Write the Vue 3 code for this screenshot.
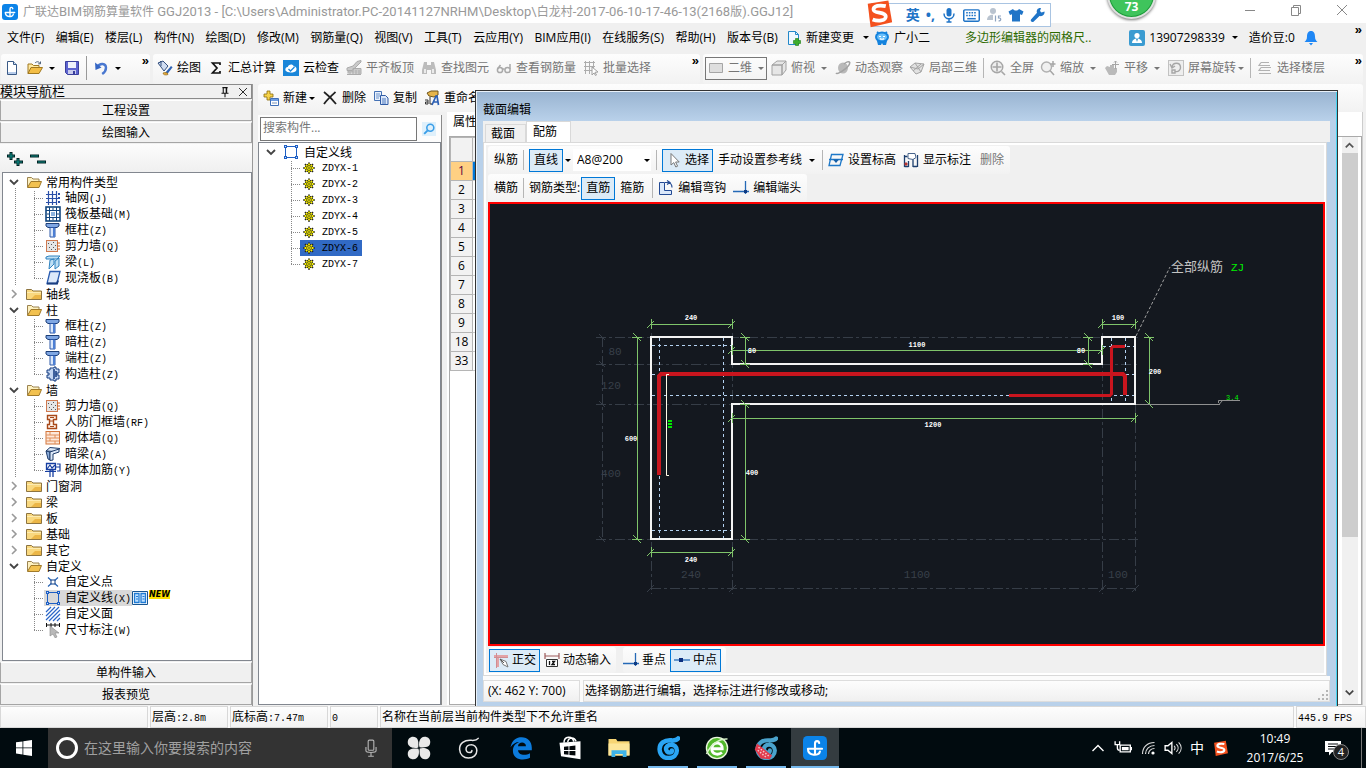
<script setup>
import { h, ref } from 'vue'

const umbrella = '<path d="M10.800 4.700C10.600 3 8 2.800 8 5v7.300M3.300 8.500h9.400M3.300 8.500c0 5 7.700 5 8 1.800" fill="none" stroke="#fff" stroke-width="1.400" stroke-linecap="round"/>'
const frameLine = '<rect x="2.500" y="2.500" width="11" height="11" fill="none" stroke="#1e5fc4"/><path d="M1 1h3v3H1zM12 1h3v3h-3zM1 12h3v3H1zM12 12h3v3h-3z" fill="#1e5fc4"/><path d="M2 2h1v1H2zM13 2h1v1h-1zM2 13h1v1H2zM13 13h1v1h-1z" fill="#cfe2ff"/>'
const swirl = (a, b) => `<path d="M14.800 1.600c-1 1.300-2.500 1.400-4.300 1.300C5.500 2.400 2.200 5 2.400 9c.2 3.500 2.700 5.700 5.900 5.700 3.400 0 5.600-2.200 5.600-5 0-2.400-1.800-4-4-3.900-1.900 0-3.300 1.400-3.200 3 .1 1.300 1.100 2.200 2.300 2.200 1 0 1.600-.6 1.600-1.400" fill="none" stroke="${a}" stroke-width="${b}" stroke-linecap="round"/>`
const sogou = '<path d="M2 2.500 13 .8l2 11.600-11.500 2.700z" fill="#f4511e"/><path d="M11.600 3.800c-3-.7-6.800-.3-6.500 2 .3 2 6.300 1 6.500 3.400.2 2.600-4.400 2.800-7 1.700" fill="none" stroke="#fff" stroke-width="2"/>'

const icons = {
  app: '<rect width="16" height="16" rx="3" fill="#0b83e8"/>' + umbrella,
  file: '<path d="M3.500 1.500h6l3 3v10h-9z" fill="#fff" stroke="#3a5a86"/><path d="M9.500 1.500v3h3" fill="#cfe0f5" stroke="#3a5a86"/><path d="M4 12h8v2H4z" fill="#b6cbea"/>',
  open: '<path d="M1 13.500V4h4l1.500 1.500H12v2" fill="#ffe9a0" stroke="#a07820"/><path d="M1 13.500 4 7.500h11.500L12 13.500z" fill="#f3bd45" stroke="#a07820"/><path d="M8 3c2-2 4-1.500 5 .5M13.500 1.500v2.300h-2.300" fill="none" stroke="#4b5f79"/>',
  save: '<path d="M1.500 1.500h13v13h-11l-2-2z" fill="#5d63cf" stroke="#3a3f9c"/><path d="M4 2h8v6H4z" fill="#eef1fb"/><path d="M4 10h8v4H4z" fill="#c9cced"/><path d="M9 11h2v3H9z" fill="#3a3f9c"/>',
  undo: '<path d="M4 7c3-4.500 9-3.800 9 .8 0 2.700-1.600 4.700-3.800 6.200" fill="none" stroke="#4a78d0" stroke-width="2.400"/><path d="M2 2.500 2.500 10l6-2.500z" fill="#3566c4"/>',
  paint: '<path d="M1 3l5-2 5 5-4 5z" fill="#cfdcf1" stroke="#34507f"/><path d="M1.500 3.500 4 1v5" fill="none" stroke="#34507f"/><path d="M8 13l6-7 1.600 1.200L10 14.500z" fill="#2f63b5"/><path d="M6 13c2-1 5-.5 5 1.500-2 1-5 .5-5-1.500z" fill="#e5a93c" stroke="#8a6414" stroke-width=".6"/>',
  sigma: '<path d="M12 5V3H4.500L9 8l-4.500 5H12v-2" fill="none" stroke="#111" stroke-width="1.700"/>',
  cloud: '<rect width="16" height="16" fill="#1a86d9"/><path d="M2.500 10.500c-.6-2 .7-3.600 2.300-3.500.5-2.700 4.800-3.500 6-.6 2.200-.2 3.400 1.900 2.400 4-1.300 2.600-9.200 2.800-10.700.1z" fill="#fff"/><path d="M5.500 9l2 2 4-4" fill="none" stroke="#1a86d9" stroke-width="1.300"/>',
  slab: '<path d="M1 8l6-2 4-4.500 4-1V2l-5 5-4 3.500H1zM2 13.500V11h5V8.500h8v5.500" fill="#c9c9c9" stroke="#ababab"/><path d="M4 12v2.500M7 11v3.500M10 10v4.500M13 10v4.500M1 14.500h14" stroke="#ababab"/>',
  binoc: '<path d="M3 2h3v3h4V2h3l2 8v4h-5v-4H6v4H1v-4z" fill="#bcbcbc"/><path d="M3 9h2v4H3zM11 9h2v4h-2z" fill="#ebebeb"/>',
  glasses: '<g fill="none" stroke="#a9a9a9" stroke-width="1.500"><circle cx="4" cy="10" r="2.600"/><circle cx="11.500" cy="10" r="2.600"/><path d="M6.500 9h2M1.500 9l3-4M14 9V4"/></g>',
  batch: '<path d="M1 2h11v1H1zM1 6h11v1H1zM1 10h8v1H1zM2 1h1v13H2zM6 1h1v13H6zM10 1h1v7h-1z" fill="#adadad"/><path d="M9 7l6 5-3 .3L13.500 15l-1 .6L11 13l-2 2z" fill="#fff" stroke="#a0a0a0"/>',
  plane: '<path d="M1.500 3.500h13v9h-13z" fill="#dedede" stroke="#a5a5a5"/>',
  cube: '<path d="M1 5l5-4h9l-4 4zM1 5h10v10H1zM11 5l4-4v9l-4 5z" fill="#e6e6e6" stroke="#a2a2a2"/>',
  orbit: '<ellipse cx="8" cy="8" rx="5" ry="5.500" fill="#b9b9b9"/><path d="M1 13c1.500 2 14-6 13.800-10.500C14 .8 11 2 9 4" fill="none" stroke="#a2a2a2" stroke-width="1.500"/>',
  part: '<path d="M1 7l5-4 9 1-3 8-5 2z" fill="#e2e2e2" stroke="#a4a4a4"/><path d="M1 7l8 2 6-5M4 11l8-7M6 3l6 9" fill="none" stroke="#a4a4a4"/>',
  full: '<circle cx="7" cy="7" r="5.800" fill="#eee" stroke="#a6a6a6" stroke-width="1.400"/><path d="M7 2.500v9M2.500 7h9M11.500 11.500 15 15" stroke="#a6a6a6" stroke-width="1.600"/>',
  zoom: '<circle cx="6.500" cy="7" r="5" fill="#f0f0f0" stroke="#b0b0b0" stroke-width="1.400"/><path d="M10 10.500l4 4.500M13 1v6M10.500 4h5" stroke="#a6a6a6" stroke-width="1.500"/>',
  pan: '<path d="M1 8l2-2 3 1V5h4v3h3v4l-2 3H5z" fill="#bababa"/><path d="M11.500 1v8M8 4.500h7M10 2.500 11.500 1 13 2.500" fill="none" stroke="#a6a6a6"/>',
  rotate: '<rect x=".500" y=".500" width="15" height="15" fill="#eee" stroke="#c2c2c2"/><path d="M4 7c1-5 8-5 8.500 0 .3 3-2 5-5 4.500M2 4l2 4 3-2M4 10h3v3H4z" fill="none" stroke="#a6a6a6" stroke-width="1.400"/>',
  floors: '<path d="M4 2.500h8M4 2.500 2 5.500h11M4 7.500h10M4 7.500 2 10.500h11M2 13.500h12" fill="none" stroke="#b2b2b2" stroke-width="1.200"/>',
  newComp: '<path d="M4 1h3v3h3v3H7v3H4V7H1V4h3z" fill="#f6d34a" stroke="#8a6c10" stroke-width=".8"/><path d="M7.500 8.500h8v7h-8z" fill="#fff" stroke="#3f6fb8"/><path d="M8 9h7v2H8z" fill="#6d9be0"/><path d="M9 13h5" stroke="#7b93b8"/>',
  cross: '<path d="M2 2c4 3 8 7 12 12M13.500 2C9 6 5 9.500 2 14" fill="none" stroke="#222" stroke-width="1.800"/>',
  copy: '<path d="M1.500 1.500h7v9h-7z" fill="#e9f1fc" stroke="#4572b5"/><path d="M3 4h4M3 6h4M3 8h3" stroke="#6d93cb"/><path d="M7.500 5.500h5l2.500 2.500v6.500H7.500z" fill="#dce8fa" stroke="#2f5ba5"/><path d="M9 9h4M9 11h4M9 13h4" stroke="#4c78bd"/>',
  rename: '<path d="M3 3l4-2h7v4l-4 2-5-1z" fill="#e5b44b" stroke="#6f551b"/><path d="M8 15l4-9h1l1.500 9M9.500 12H14" fill="none" stroke="#2b5fb4" stroke-width="1.700"/><path d="M1 10h3v4H1.500V12H4M6 7v7h2" fill="none" stroke="#333"/>',
  search: '<rect width="16" height="16" fill="#dff0fb"/><circle cx="9.500" cy="6.500" r="4" fill="none" stroke="#3a9ee8" stroke-width="1.800"/><path d="M6.500 9.500 2.500 13.500" stroke="#3a9ee8" stroke-width="2.200"/>',
  newDoc: '<path d="M2.500 1.500h7l3 3v10h-10z" fill="#eef7ff" stroke="#2288c9"/><path d="M9.500 1.500v3h3" fill="none" stroke="#2288c9"/><path d="M9.500 8.500h3v2h2v3h-2v2h-3v-2h-2v-3h2z" fill="#3dae2b" stroke="#1d7a10" stroke-width=".6"/>',
  mascot: '<path d="M3 2l1.500 1M13 2l-1.500 1" stroke="#1583dd" stroke-width="2"/><ellipse cx="8" cy="7" rx="7" ry="5.500" fill="#1583dd"/><path d="M3 11l1 4h3l1-2 1 2h3l1-4z" fill="#1583dd"/><ellipse cx="8" cy="7" rx="5" ry="3.500" fill="#6cc0fa"/><path d="M5 6.500h2M9 6.500h2M6 8.500c1 1 3 1 4 0" fill="none" stroke="#fff" stroke-width="1.200"/>',
  user: '<rect width="16" height="16" rx="2" fill="#3a9bd1"/><circle cx="8" cy="5.500" r="2.600" fill="#fff"/><path d="M3 13c0-6 10-6 10 0z" fill="#fff"/><path d="M7 9h2l-1 3z" fill="#3a9bd1"/>',
  bell: '<path d="M8 1c3 0 4 2.500 4 5.500 0 3 1 4 2.500 5.500h-13C3 10.500 4 9.500 4 6.500 4 3.500 5 1 8 1zM6 13h4l-2 2.500z" fill="#1f87f5"/>',
  folderOpen: '<path d="M1.500 13V3.500h4L7 5h6v2" fill="#fdf0bf" stroke="#9b8350"/><path d="M1.500 13.500 5 7.500h10.500L13 13.500z" fill="#f2c14f" stroke="#a07a2a"/>',
  folder: '<path d="M.500 13.500v-10h5L7 5h8.500v8.500z" fill="#f9d87f" stroke="#8d7440"/><path d="M1 6.500h14" stroke="#fdebb0"/><path d="M9 9h6v4H5z" fill="#ebb647"/>',
  grid: '<path d="M1 4.500h11M1 8.500h13M1 12.500h11M3.500 1v14M7.500 1v14M11.500 1v14" stroke="#2b50a8" stroke-width="1.200"/><path d="M13 3h2v2h-2zM13 7h2v2h-2zM13 11h2v2h-2z" fill="#2b50a8"/>',
  raft: '<rect x="1" y="1" width="14" height="14" fill="#fff" stroke="#12467f" stroke-width="1.600"/><rect x="4.500" y="4.500" width="7" height="7" fill="none" stroke="#12467f"/><path d="M6 6h4v4H6z" fill="#8fb5df"/><path d="M1 4.500h3M1 11.500h3M12 4.500h3M12 11.500h3M4.500 1v3M11.500 1v3M4.500 12v3M11.500 12v3M8 2v2M8 12v2M2 8h2M12 8h2" stroke="#12467f"/>',
  column: '<path d="M1 1.500h13v2.500l-2 1.500H3L1 4z" fill="#7ea6e3" stroke="#1d3f78"/><path d="M5 5.500h5v9.500H5z" fill="#dbe8fb" stroke="#2c58a8"/><path d="M8 6h2v9H8z" fill="#4c7fd4"/>',
  wall: '<rect x="1.500" y="2.500" width="11" height="11" fill="#e5e5e5" stroke="#cf7a50"/><path d="M3 5h1v1H3zM6 6h1v1H6zM4 9h1v1H4zM8 9h1v1H8zM6 11h1v1H6zM10 11h1v1h-1zM10 7h1v1h-1zM8 4h1v1H8z" fill="#555"/><path d="M12 5h3M12 8h3M12 11h3" stroke="#cf5d1a"/>',
  beam: '<path d="M1 3l3-1h11l-3 3H1zM5 6l4-1v5l-5 5zM10 7l4-3v8l-4 3z" fill="#bfe0f5" stroke="#3183c0"/>',
  plate: '<path d="M5 1.500h10l-3 12H2z" fill="#dce9fa" stroke="#2a5cb0" stroke-width="1.300"/><path d="M2 13.500h10l1-3" fill="none" stroke="#1a3f82" stroke-width="2"/>',
  tie: '<path d="M5 2h4V1h2v2h3v4h-2v2h2v4h-3v2H9v-1H5v-2H2V9h2V7H2V4h3z" fill="#c3d6f2" stroke="#123a80"/><path d="M9 3v10M11 5v6" stroke="#123a80" stroke-width="1.500"/>',
  gate: '<path d="M2.500 1.500h9v4h-3v5h3v4h-9v-4h2v-5h-2z" fill="#fff3ea" stroke="#a8491a" stroke-width="1.400"/><path d="M5 3.500h4M5 7h3M5 12.500h4" stroke="#a8491a"/>',
  brick: '<rect x="1" y="1.500" width="13.500" height="12.500" fill="#fde8da" stroke="#d3763d"/><path d="M1 5h13M1 8h13M1 11h13M5 2v3M10 5v3M5 8v3M10 11v3" stroke="#e08e5b"/>',
  hidden: '<path d="M1 5l4-3.500 10 1L11 5.500z" fill="#dce8f7" stroke="#1f3c6b"/><path d="M1 5l4 1v8L3 13z" fill="#8daedb" stroke="#1f3c6b"/><path d="M5 6l9-3v3L8 8v6l-3 .5z" fill="#dce8f7" stroke="#1f3c6b"/>',
  masonry: '<path d="M1.500 1.500h9v6h-9zM5 8h3v7" fill="#fff" stroke="#163ea0" stroke-width="1.300"/><path d="M2 7l3-4 2 3 3-3M0 9.500h11M12 2h3v7h-3M11 5h4M5 8v7" fill="none" stroke="#163ea0" stroke-width="1.200"/>',
  point: '<path d="M3 3.500l10 9M13 3.500l-10 9" stroke="#2763b4" stroke-width="1.200"/><path d="M6 6h4v4H6z" fill="#fff" stroke="#0e3f86"/>',
  line: frameLine,
  face: '<path d="M1 6l5-5M1 10l9-9M1 14l13-13M4 15 15 4M8 15l7-7M12 15l3-3" stroke="#2a66c8" stroke-width="1.200"/>',
  dim: '<path d="M1.500 1v4M6 1v4M10 1v4M14.500 1v4M1 3h14" stroke="#111"/><path d="M5 4l9 7h-4l2 4-2 .8L8 12l-3 2z" fill="#b9b9b9" stroke="#888" stroke-width=".6"/>',
  book: '<path d="M.500 1.500h15v13H.500z" fill="#fff" stroke="#175591"/><path d="M2.500 3.500H7v9H2.500zM9 3.500h4.500v9H9z" fill="#bfe0ff" stroke="#1f7bd4" stroke-width="1.300"/><path d="M4 6.500h2M4 9h2M10.500 6.500h2M10.500 9h2" stroke="#1f7bd4"/>',
  gear: '<path d="M8 .5v15M.5 8h15M2.700 2.700l10.600 10.600M13.300 2.700 2.700 13.300" stroke="#222" stroke-width="2.400"/><circle cx="8" cy="8" r="5.600" fill="#222"/><path d="M8 2v12M2 8h12M4 4l8 8M12 4l-8 8" stroke="#f8f000" stroke-width="2.400"/><circle cx="8" cy="8" r="3.200" fill="#f8f000" stroke="#222"/><circle cx="8" cy="8" r="1.100" fill="#222"/>',
  cursor: '<path d="M5 1.500 5 13l2.800-2.400L9.800 15l1.800-.8-2-4.200h3.600z" fill="#fff" stroke="#777"/>',
  level: '<path d="M3.500 2.500H15l-3 11H1zM1 7.500h14" fill="none" stroke="#1e78c8" stroke-width="1.300"/><path d="M5 7.500h6L8 11z" fill="#155fa8"/>',
  note: '<path d="M1.500 3v12M14.500 3v12M1.500 4.500h3M1.500 14.500h4M10 14.500h4M10 7v8M5.500 9v6" fill="none" stroke="#1d3f6e" stroke-width="1.300"/><path d="M5 1.500h7l1 4-3 2-5-1z" fill="#fff" stroke="#48648c"/><path d="M2 11h2v2H2z" fill="#e03a22" stroke="#a33"/>',
  hook: '<path d="M1.500 2.500h5v8h7v4h-12z" fill="#dbe8fa" stroke="#234a94"/><path d="M7 2.500h2c4 0 5 2 5 5M9 .500l3 2-3 2" fill="none" stroke="#234a94" stroke-width="1.200"/>',
  perp: '<path d="M0 11.500h16M12.500 1v13" stroke="#2569b6" stroke-width="1.300"/><path d="M11 10h3v3h-3z" fill="#103b82"/>',
  mid: '<path d="M0 8h16" stroke="#2569b6" stroke-width="1.300"/><path d="M5 6h4v4H5z" fill="#0c2f80"/>',
  ortho: '<path d="M1 3h14v2.500H6V15H3.500V5.500H1z" fill="#e3a3a6"/><path d="M3.500 1v15M1 5.500h14" fill="none" stroke="#d08d92"/><path d="M7 7l6 2.500 2 5.500-5-2.500z" fill="#fff" stroke="#777"/><path d="M7 7l4 4" stroke="#555"/>',
  dyn: '<path d="M1 1v6M15 1v6M1 4h14" stroke="#9d5a5a" stroke-width="1.200"/><path d="M2.500 7.500h11v7h-11z" fill="#fff" stroke="#333"/><path d="M5.500 9v4M8 9.500h2.500L8 12.500h3" fill="none" stroke="#111" stroke-width="1.300"/>',
  sogou,
  mic: '<rect x="5.500" y="1" width="5" height="8.500" rx="2.500" fill="#1f74c7"/><path d="M3 6.500c0 7 10 7 10 0M8 12v3M5.500 15h5" fill="none" stroke="#1f74c7" stroke-width="1.500"/>',
  keys: '<rect x=".700" y="2.700" width="14.600" height="10.600" rx="1" fill="#fff" stroke="#1f74c7" stroke-width="1.400"/><path d="M3 5.500h10M3 8h10" stroke="#1f74c7" stroke-width="1.400" stroke-dasharray="1.500 1"/><path d="M4 11h8" stroke="#1f74c7" stroke-width="1.400"/>',
  person: '<circle cx="7" cy="4" r="3" fill="#b9c3cf"/><path d="M1 13c0-7 11-7 11 0z" fill="#b9c3cf"/><rect x="7" y="8" width="9" height="7" fill="#fff"/><path d="M9.500 8.500v6M15 9h-2.500v2c3-.5 3 3 0 3" fill="none" stroke="#8fa4c0" stroke-width="1.200"/>',
  shirt: '<path d="M5 2c1.500 2 4.500 2 6 0l4.500 2.500-1.500 3.500-2-.8V14.500H4V7.200L2 8 .5 4.500z" fill="#1f74c7"/>',
  wrench: '<path d="M14.500 4.500l-3 1-1.500-1.500 1-3c-3-.5-5 2-4 4.800L1 12.500c-1 1.500 1 3.300 2.500 2.300L9.500 9c3 .8 5.500-1.500 5-4.500z" fill="#1f74c7"/>',
  windows: '<path d="M0 2.300 6.500 1.400v6.100H0zM7.300 1.300 16 0v7.500H7.300zM0 8.300h6.500v6.200L0 13.600zM7.300 8.300H16V16l-8.700-1.300z" fill="#fff"/>',
  voice: '<rect x="5.500" y="1" width="5" height="9" rx="1" fill="none" stroke="#b5b5b5"/><path d="M3.500 7v3.500c0 2 9 2 9 0V7M8 12v3M5.500 15.300h5" fill="none" stroke="#b5b5b5"/>',
  fan: '<g fill="#e9e9e9"><path id="petal" d="M7.500 7.600C5.500 8.500.5 8 .5 4.200.5 2 2 .5 4 .5c3 0 4 2.500 3.500 7.100z"/><path d="M8.400 7.500C7.500 5.500 8 .5 11.800.5c2.200 0 3.700 1.500 3.700 3.500 0 3-2.500 4-7.100 3.500z"/><path d="M8.500 8.400c2-.9 7-.4 7 3.400 0 2.200-1.500 3.700-3.500 3.700-3 0-4-2.500-3.500-7.100z"/><path d="M7.600 8.500c.9 2 .4 7-3.400 7C2 15.500.5 14 .5 12c0-3 2.500-4 7.100-3.500z"/></g>',
  swirlW: swirl('#e6e6e6', 1),
  swirlB: swirl('#2aa5f4', 3),
  swirlR: swirl('#4aa3cc', 2.8) + '<path d="M2 5l10 8-1.500 2.500-6-.5L.500 9z" fill="#e23b4d"/><path d="M3 7.500l7 6M2.500 9.500l6 5" stroke="#f7c5ca" stroke-dasharray="1 1"/>',
  edge: '<path d="M1 7.500C2 2.500 5 .8 8.500.8c4 0 6.700 2.800 6.700 7v1.700H6c.3 3.500 5 3.800 8 2v3c-4 2.200-11.400 1.600-11.400-4.700C2.600 7 4.200 5 6.800 4 4.500 4 2.500 5.300 1 7.500zM6 6.800h5.300C11.300 3.500 6.200 3.500 6 6.800z" fill="#0c7bdc"/>',
  store: '<path d="M1 4.500 15 3.500v12L2 13.500z" fill="#fff"/><path d="M4 4.500c0-4.500 5.500-5 6.500-.8M6.500 4C7 .5 11 .5 12 3.500" fill="none" stroke="#fff"/><path d="M4 7.200l3-.3v2.500H4zM7.600 6.800l4-.5v3H7.600zM4 10h3v2.500l-3-.3zM7.600 10h4v3l-4-.4z" fill="#04090c"/>',
  explorer: '<path d="M1 2h5l1 1.500h8V13H1z" fill="#f7d574"/><path d="M1 5h14v8H1z" fill="#fde69a"/><path d="M3 14V9.500h10V14h-2.500v-2h-5v2z" fill="#3fb3e8"/>',
  browser: '<circle cx="8" cy="8" r="7.500" fill="#eaf7df"/><circle cx="8" cy="8" r="6.600" fill="#52b82c"/><path d="M4.500 8.500h7c.2-5-6.700-5-7 0 0 4 4.500 4.400 6.800 2.500" fill="none" stroke="#fff" stroke-width="1.900"/><path d="M1 12C4 5 10 1.500 15 2" fill="none" stroke="#d9f3cb"/>',
  up: '<path d="M2.500 11 8 5.500l5.500 5.500" fill="none" stroke="#fff" stroke-width="1.400"/>',
  battery: '<path d="M5.500 5.500h9v6h-9z" fill="none" stroke="#fff" stroke-width="1.200"/><path d="M7 7h6v3H7zM15 7h1v3h-1z" fill="#fff"/><path d="M1 2v3h4V2M3 5v3c0 2 1 2 2 2" fill="none" stroke="#fff" stroke-width="1.200"/>',
  wifi: '<path d="M2.500 14C2.500 7 7.500 2.500 14.500 2.500M5.500 14c0-5 4-8.500 9-8.500M8.500 14c0-3 2.500-5.500 6-5.500" fill="none" stroke="#ddd" stroke-width="1.200"/><circle cx="13" cy="13" r="1.600" fill="#fff"/>',
  sound: '<path d="M1 6h2.500L7 3v10l-3.500-3H1z" fill="none" stroke="#fff" stroke-width="1.200"/><path d="M9 6c1 1.200 1 2.800 0 4M11 4.500c2 2 2 5 0 7M13 3c3 3 3 7 0 10" fill="none" stroke="#ddd"/>',
  msg: '<path d="M0 1h16v11H7l-3 3.500V12H0z" fill="#fff"/><path d="M3 4h10M3 6.500h10M3 9h6" stroke="#04090c"/>',
  pin: '<path d="M5 3h6M6 3v6M9.500 3v6M4 9.500h8M8 10v4" fill="none" stroke="#111" stroke-width="1.200"/><path d="M9 3h1.500v6H9z" fill="#111"/>',
  x: '<path d="M3.500 3.500l9 9M12.500 3.500l-9 9" stroke="#222" stroke-width="1.100"/>',
  min: '<path d="M3 8.500h10" stroke="#888"/>',
  restore: '<path d="M3.500 5.500h7v8h-7zM5.500 5V3.500h7v8h-2" fill="none" stroke="#888"/>',
  close: '<path d="M3 3l10 10M13 3 3 13" stroke="#888"/>',
  expand: '<path d="M4 1v8M0 5h8M11 7v8M7 11h9" stroke="#022" stroke-width="3"/><path d="M4 2v6M1 5h6M11 8v6M8 11h7" stroke="#0e8a84" stroke-width="1.200"/>',
  collapse: '<path d="M0 5h9M7 11h9" stroke="#022" stroke-width="3"/><path d="M1 5h7M8 11h7" stroke="#0e8a84" stroke-width="1.200"/>',
  down: '<path d="M4 6l4 4 4-4" fill="none" stroke="#444" stroke-width="1.800"/>',
  right: '<path d="M6 4l4 4-4 4" fill="none" stroke="#999" stroke-width="1.600"/>',
  scrollUp: '<path d="M4 10l4-4 4 4" fill="none" stroke="#555" stroke-width="1.800"/>'
}
const Ic = (p) => h('svg', { width: p.s || 16, height: p.s || 16, viewBox: '0 0 16 16', 'aria-hidden': 'true', innerHTML: icons[p.n] })
Ic.props = ['n', 's']

const menus = ['文件(F)', '编辑(E)', '楼层(L)', '构件(N)', '绘图(D)', '修改(M)', '钢筋量(Q)', '视图(V)', '工具(T)', '云应用(Y)', 'BIM应用(I)', '在线服务(S)', '帮助(H)', '版本号(B)']
const tools = [
  ['paint', '绘图'], ['sigma', '汇总计算'], ['cloud', '云检查'], ['slab', '平齐板顶', 1],
  ['binoc', '查找图元', 1], ['glasses', '查看钢筋量', 1], ['batch', '批量选择', 1]
]
const compTools = [['newComp', '新建', 1], ['cross', '删除'], ['copy', '复制'], ['rename', '重命名']]
const tree = [
  ['常用构件类型', true, [['grid', '轴网', '(J)'], ['raft', '筏板基础', '(M)'], ['column', '框柱', '(Z)'], ['wall', '剪力墙', '(Q)'], ['beam', '梁', '(L)'], ['plate', '现浇板', '(B)']]],
  ['轴线', false, []],
  ['柱', true, [['column', '框柱', '(Z)'], ['column', '暗柱', '(Z)'], ['column', '端柱', '(Z)'], ['tie', '构造柱', '(Z)']]],
  ['墙', true, [['wall', '剪力墙', '(Q)'], ['gate', '人防门框墙', '(RF)'], ['brick', '砌体墙', '(Q)'], ['hidden', '暗梁', '(A)'], ['masonry', '砌体加筋', '(Y)']]],
  ['门窗洞', false, []], ['梁', false, []], ['板', false, []], ['基础', false, []], ['其它', false, []],
  ['自定义', true, [['point', '自定义点', ''], ['line', '自定义线', '(X)'], ['face', '自定义面', ''], ['dim', '尺寸标注', '(W)']]]
]
const comps = [1, 2, 3, 4, 5, 6, 7]
const rows = [1, 2, 3, 4, 5, 6, 7, 8, 9, 18, 33]
const keyword = ref('')

const hDims = [
  [651, 732, 324, '240', 691, 320], [1102, 1135, 324, '100', 1118, 320], [732, 1102, 350, '1100', 917, 347],
  [732, 1135, 418, '1200', 933, 427], [651, 732, 552, '240', 691, 562]
]
const vDims = [
  [337, 364, 745, '80', 752, 353], [337, 364, 1088, '80', 1081, 353], [337, 404, 1149, '200', 1155, 374],
  [404, 539, 745, '400', 752, 475], [337, 539, 637, '600', 631, 441]
]
const hPath = (d) => `M${d[0]}.5 ${d[2]}.5H${d[1]}.5` + [d[0], d[1]].map(x => `M${x}.5 ${d[2] - 5}v10M${x - 4} ${d[2] + 4}l7-7`).join('')
const vPath = (d) => `M${d[2]}.5 ${d[0]}.5V${d[1]}.5` + [d[0], d[1]].map(y => `M${d[2] - 5} ${y}.5h10M${d[2] - 4} ${y - 4}l8 8`).join('')
const ghosts = [['80', 615, 355], ['120', 611, 389], ['400', 611, 477], ['240', 691, 578], ['1100', 917, 578], ['100', 1118, 578]]
const apps = [['fan', ''], ['swirlW', ''], ['edge', ''], ['store', ''], ['explorer', ''], ['swirlB', 'run'], ['browser', 'run'], ['swirlR', 'run'], ['app', 'run current']]
</script>

<template>
  <div class="screen">
    <header class="titlebar">
      <Ic n="app" />
      <h1><span>广联达</span>BIM<span>钢筋算量软件</span> GGJ2013 - [C:\Users\Administrator.PC-20141127NRHM\Desktop\<span>白龙村</span>-2017-06-10-17-46-13(2168<span>版</span>).GGJ12]</h1>
      <div class="winbtns">
        <button aria-label="最小化"><Ic n="min" /></button>
        <button aria-label="还原"><Ic n="restore" /></button>
        <button aria-label="关闭"><Ic n="close" /></button>
      </div>
    </header>

    <div class="ime">
      <Ic n="sogou" s="30" class="sg" />
      <b>英</b><b class="punct">•,</b>
      <Ic n="mic" /><Ic n="keys" s="17" /><Ic n="person" /><Ic n="shirt" /><Ic n="wrench" />
    </div>
    <div class="ball">73</div>

    <nav class="menubar">
      <div class="menus"><button v-for="m in menus" :key="m">{{ m }}</button></div>
      <button class="tb"><Ic n="newDoc" />新建变更<i class="arr far"></i></button>
      <button class="tb mascot"><Ic n="mascot" />广小二</button>
      <a class="tip" href="#">多边形编辑器的网格尺..</a>
      <div class="account">
        <button class="tb"><Ic n="user" />13907298339<i class="arr"></i></button>
        <button>造价豆:0</button>
        <button aria-label="通知"><Ic n="bell" /></button>
      </div>
      <span class="more">»</span>
    </nav>

    <div class="toolbars">
      <div class="strip files">
        <button aria-label="新建"><Ic n="file" /></button>
        <button aria-label="打开" class="tb"><Ic n="open" /><i class="arr"></i></button>
        <button aria-label="保存"><Ic n="save" /></button>
        <span class="sep"></span>
        <button aria-label="撤销" class="tb"><Ic n="undo" /><i class="arr"></i></button>
        <span class="more">»</span>
      </div>
      <div class="strip main-tools">
        <button v-for="t in tools" :key="t[1]" class="tb" :class="{ off: t[2] }"><Ic :n="t[0]" />{{ t[1] }}</button>
        <span class="more">»</span>
      </div>
      <div class="strip view-tools off">
        <label class="mode"><Ic n="plane" /><select aria-label="视图模式"><option>二维</option></select><i class="arr"></i></label>
        <button class="tb"><Ic n="cube" />俯视<i class="arr"></i></button>
        <button class="tb"><Ic n="orbit" />动态观察</button>
        <button class="tb"><Ic n="part" />局部三维</button>
        <span class="sep"></span>
        <button class="tb"><Ic n="full" />全屏</button>
        <button class="tb"><Ic n="zoom" />缩放<i class="arr"></i></button>
        <button class="tb"><Ic n="pan" />平移<i class="arr"></i></button>
        <button class="tb"><Ic n="rotate" />屏幕旋转<i class="arr near"></i></button>
        <span class="sep"></span>
        <button class="tb"><Ic n="floors" />选择楼层</button>
        <span class="more">»</span>
      </div>
    </div>

    <main class="work">
      <aside class="nav">
        <div class="navhead"><span>模块导航栏</span><button aria-label="固定"><Ic n="pin" s="14" /></button><button aria-label="关闭"><Ic n="x" s="14" /></button></div>
        <button class="fold">工程设置</button>
        <button class="fold">绘图输入</button>
        <div class="treebar"><button aria-label="全部展开"><Ic n="expand" /></button><button aria-label="全部折叠"><Ic n="collapse" /></button></div>
        <ul class="tree">
          <li v-for="(g, gi) in tree" :key="gi" :class="{ rail: g[1] && gi < 9 }">
            <div class="grow"><Ic :n="g[1] ? 'down' : 'right'" /><Ic :n="g[1] ? 'folderOpen' : 'folder'" /><span>{{ g[0] }}</span></div>
            <ul v-if="g[1]" class="kids">
              <li v-for="k in g[2]" :key="k[1]">
                <span class="leaf" :class="{ sel: k[0] === 'line' }"><Ic :n="k[0]" /><span>{{ k[1] }}<code>{{ k[2] }}</code></span></span>
                <template v-if="k[0] === 'line'"><Ic n="book" /><em>NEW</em></template>
              </li>
            </ul>
          </li>
        </ul>
        <button class="fold">单构件输入</button>
        <button class="fold">报表预览</button>
      </aside>

      <section class="right">
        <div class="strip comp-tools">
          <button v-for="t in compTools" :key="t[1]" class="tb"><Ic :n="t[0]" />{{ t[1] }}<i v-if="t[2]" class="arr near"></i></button>
        </div>
        <div class="cols">
          <div class="comps">
            <div class="find"><input v-model="keyword" type="text" placeholder="搜索构件..." aria-label="搜索构件"><button aria-label="搜索"><Ic n="search" s="14" /></button></div>
            <div class="list">
              <div class="grow"><Ic n="down" /><Ic n="line" /><span>自定义线</span></div>
              <ul class="kids">
                <li v-for="c in comps" :key="c"><span class="leaf" :class="{ on: c === 6 }"><Ic n="gear" s="12" /><code>ZDYX-{{ c }}</code></span></li>
              </ul>
            </div>
          </div>
          <div class="props">
            <div class="ptab">属性</div>
            <div class="pbody">
              <table>
                <thead><tr><th></th><th class="name"></th></tr></thead>
                <tbody><tr v-for="r in rows" :key="r" :class="{ first: r === 1 }"><th>{{ r }}</th><td></td></tr></tbody>
              </table>
              <div class="scroll"><Ic n="scrollUp" s="15" /><div class="thumb"></div><Ic n="down" s="15" /></div>
            </div>
          </div>
        </div>
      </section>

      <section class="dialog" role="dialog" aria-label="截面编辑">
        <h2>截面编辑</h2>
        <div class="tabs"><button>截面</button><button class="act">配筋</button></div>
        <div class="page">
          <div class="strip dtools">
            <button>纵筋</button><span class="sep"></span>
            <button class="push">直线</button><i class="arr"></i>
            <label class="spec"><select aria-label="钢筋规格"><option>A8@200</option></select><i class="arr"></i></label>
            <span class="sep"></span>
            <button class="push tb pick"><Ic n="cursor" />选择</button>
            <button class="tb ref">手动设置参考线<i class="arr"></i></button>
            <span class="sep"></span>
            <button class="tb"><Ic n="level" />设置标高</button>
            <button class="tb lvl"><Ic n="note" />显示标注</button>
            <button class="off del">删除</button>
          </div>
          <div class="strip dtools">
            <button>横筋</button><span class="sep"></span>
            <span class="kind">钢筋类型:</span>
            <button class="push">直筋</button><button class="gu">箍筋</button>
            <span class="sep"></span>
            <button class="tb"><Ic n="hook" />编辑弯钩</button>
            <button class="tb lvl"><Ic n="perp" />编辑端头</button>
          </div>
          <div class="canvas">
            <svg viewBox="490 204 833 440" role="img" aria-label="截面配筋图">
              <g fill="none" stroke="#363d47" stroke-dasharray="10 3 3 3">
                <path d="M596 337.500H1140M596 364.500H732M1102 364.500H1140M596 404.500H732M596 539.500H1140M651.500 333V594M732.500 333V594M1102.500 333V594M1135.500 404V594M602.500 337V539M651 588.500H1135" />
                <path stroke-dasharray="none" d="M599 334l6 6M599 361l6 6M599 401l6 6M599 536l6 6M647 592l7-7M729 592l7-7M1099 592l7-7M1132 592l7-7" />
              </g>
              <g class="ghost"><text v-for="g in ghosts" :key="g[0] + g[1]" :x="g[1]" :y="g[2]">{{ g[0] }}</text></g>
              <path d="M651 337H732V364H1102V337H1135V404H732V539H651Z" fill="none" stroke="#f4f4f4" stroke-width="2" />
              <path d="M659.500 338V538M723.500 338V538M652 345.500H731M652 395.500H1134M652 530.500H731M652 374.500H657M1111.500 338V403M1125.500 338V403M1103 346.500H1134M1126 374.500H1134" fill="none" stroke="#b4d2f2" stroke-dasharray="3 3" />
              <path d="M659 475V376l2-2H1123l2 2V395" fill="none" stroke="#c9151e" stroke-width="4" />
              <path d="M1009 395.500H1110l1.500-1.500V348l1.500-1.500H1125" fill="none" stroke="#c9151e" stroke-width="3" />
              <path d="M669 374.500H666.500V475.500H669" fill="none" stroke="#fffbe8" />
              <path d="M668 420h4v2h-4zM668 423h4v2h-4zM668 426h4v2h-4z" fill="#00e600" />
              <path v-for="d in hDims" :key="'h' + d" :d="hPath(d)" fill="none" stroke="#7fc46a" />
              <path v-for="d in vDims" :key="'v' + d" :d="vPath(d)" fill="none" stroke="#7fc46a" />
              <g class="num"><text v-for="d in [...hDims, ...vDims]" :key="'t' + d" :x="d[4]" :y="d[5]">{{ d[3] }}</text></g>
              <path d="M1136 336L1170 267" stroke="#a0a0a0" stroke-dasharray="3 2" />
              <path d="M1136 404.500H1220M1240 400.500H1218.500V403M1219 404.500l3.500-4" fill="none" stroke="#909090" />
              <text x="1171" y="271" class="lab">全部纵筋</text>
              <text x="1231" y="271" class="grn">ZJ</text>
              <text x="1226" y="400" class="grn sm">3.4</text>
            </svg>
          </div>
          <div class="snaps">
            <div class="strip"><button class="push tb"><Ic n="ortho" />正交</button><button class="tb"><Ic n="dyn" />动态输入</button></div>
            <div class="strip"><button class="tb"><Ic n="perp" />垂点</button><button class="push tb"><Ic n="mid" />中点</button></div>
          </div>
        </div>
        <footer class="dstat">
          <span>(X: 462 Y: 700)</span><span>选择钢筋进行编辑，选择标注进行修改或移动;</span>
          <svg class="grip" width="11" height="11" viewBox="0 0 11 11" aria-hidden="true"><path d="M8 0h2v2H8zM4 4h2v2H4zM8 4h2v2H8zM0 8h2v2H0zM4 8h2v2H4zM8 8h2v2H8z" fill="#b5b5b5" /></svg>
        </footer>
      </section>
    </main>

    <footer class="status">
      <span></span><span>层高<code>:2.8m</code></span><span>底标高<code>:7.47m</code></span><span><code>0</code></span><span>名称在当前层当前构件类型下不允许重名</span><span><code>445.9 FPS</code></span>
    </footer>

    <footer class="taskbar">
      <button class="start" aria-label="开始"><Ic n="windows" /></button>
      <label class="cortana"><span class="ring"></span><input type="text" placeholder="在这里输入你要搜索的内容" aria-label="搜索"><Ic n="voice" s="18" /></label>
      <div class="apps"><button v-for="a in apps" :key="a[0]" :class="a[1]" :aria-label="a[0]"><Ic :n="a[0]" s="24" /></button></div>
      <div class="tray">
        <Ic n="up" /><Ic n="battery" s="18" /><Ic n="wifi" /><Ic n="sound" s="18" /><span>中</span><Ic n="sogou" s="17" />
        <time>10:49<br>2017/6/25</time>
        <div class="msg"><Ic n="msg" /><b>4</b></div>
        <i class="peek"></i>
      </div>
    </footer>
  </div>
</template>

<style>
html, body { margin: 0; overflow: hidden; }
</style>

<style scoped>
.screen { position: relative; height: 100vh; display: flex; flex-direction: column; overflow: hidden; background: #f0f0f0; color: #000; font: 12px/16px "Open Sans", "Noto Sans CJK SC", sans-serif; white-space: nowrap; }
.screen * { box-sizing: border-box; }
svg { flex: none; display: block; }
button { font: inherit; color: inherit; background: none; border: 0; padding: 0; white-space: nowrap; }
input, select { font: inherit; color: inherit; border: 0; outline: 0; padding: 0; min-width: 0; }
select { appearance: none; background: none; }
ul { list-style: none; margin: 0; padding: 0; }
code { font: 10px/16px "Liberation Mono", monospace; }
h1, h2 { margin: 0; font-size: 12px; font-weight: 400; }
.tb { display: flex; align-items: center; gap: 4px; }
.arr { flex: none; width: 0; margin: 0 2px; border: 3px solid transparent; border-top-color: currentColor; border-bottom: 0; }
.sep { flex: none; width: 1px; height: 20px; background: #b5b5b5; }
.off { color: #767676; }
.more { margin-left: auto; align-self: flex-start; padding-right: 1px; font: bold 13px/14px "Liberation Sans", sans-serif; color: #000; }
.strip { display: flex; align-items: center; background: linear-gradient(#fdfdfd, #f2f2f2); border-radius: 3px; }

.titlebar { flex: none; height: 23px; display: flex; align-items: center; background: #fff; padding-left: 2px; color: #999; }
.titlebar h1 { margin-left: 5px; flex: 1; font: 13px/18px Roboto, "Noto Sans CJK SC", sans-serif; }
.titlebar h1 span { font-size: 12px; }
.winbtns { display: flex; gap: 30px; padding: 0 16px 3px 0; }
.ime { position: absolute; z-index: 3; top: 3px; right: 315px; height: 24px; width: 180px; display: flex; align-items: center; justify-content: flex-end; gap: 6px; padding-right: 4px; background: #fff; border: 1px solid #a9c4e2; color: #1f74c7; }
.ime .sg { position: absolute; left: -8px; top: -5px; }
.ime b { font-size: 14px; }
.ball { position: absolute; z-index: 3; top: -30px; right: 210px; width: 49px; height: 49px; padding-top: 28px; border-radius: 50%; border: 2px solid #e0e0e0; background: #3fc45c; box-shadow: 0 1px 3px #777, inset 0 0 0 1px #1f9a3c; color: #fff; font-weight: 700; line-height: 14px; text-align: center; }

.menubar { flex: none; height: 31px; display: flex; align-items: center; padding-bottom: 2px; }
.menus { width: 780px; flex: none; display: flex; justify-content: space-between; padding: 0 2px 0 7px; }
.menubar > .tb { margin-left: 6px; }
.arr.far { margin-left: 5px; }
.menubar > .mascot { margin-left: 3px; }
.tip { color: #2d6a00; text-decoration: none; margin-left: 35px; }
.account { display: flex; align-items: center; gap: 8px; margin-left: auto; padding-right: 36px; }
.account .arr { margin: 0 3px; }
.menubar > .more { margin: 0 3px 0 0; }

.toolbars { flex: none; height: 30px; display: flex; gap: 3px; padding: 0 3px 0 1px; }
.toolbars .strip { gap: 7px; padding-bottom: 2px; }
.toolbars .strip .sep { margin: 0 -1px; }
.files { width: 149px; padding-left: 3px; }
.files .sep { height: 24px; background: #999; }
.main-tools { width: 547px; padding-left: 4px; }
.view-tools { flex: 1; padding-left: 2px; }
.view-tools .tb + .tb { margin-left: -1px; }
.mode { height: 23px; width: 62px; display: flex; align-items: center; gap: 4px; margin-right: -3px; padding: 0 2px; border: 1px solid #777; }
.mode select { width: 28px; }
.mode .arr { margin: 0; }

.work { position: relative; flex: 1; min-height: 0; display: flex; gap: 5px; }
.nav { flex: none; width: 253px; display: flex; flex-direction: column; gap: 1px; border-right: 1px solid #999; padding-bottom: 1px; }
.navhead { height: 15px; display: flex; align-items: center; gap: 4px; border: 1px solid #8a8a8a; border-left: 0; padding-right: 1px; }
.navhead span { flex: 1; font-size: 13px; line-height: 13px; }
.fold { height: 21px; border: 1px solid #a5a5a5; border-top-color: #fff; padding-top: 1px; line-height: 18px; }
.treebar { height: 27px; display: flex; align-items: center; gap: 7px; padding: 3px 0 0 7px; background: linear-gradient(#fcfcfc, #f0f0f0); }
.tree { flex: 1; min-height: 0; overflow: hidden; margin-left: 2px; background: #fff; border: 1px solid #82878f; padding: 1px 0 0 3px; }
.tree > .rail { background: repeating-linear-gradient(#888 0 1px, transparent 1px 2px) 9px 14px / 1px 100% no-repeat; }
.grow { height: 16px; display: flex; align-items: center; gap: 4px; }
.grow > span { margin-left: 1px; padding-top: 1px; }
.tree .grow > span { margin-left: 0; }
.kids { margin-left: 28px; background: repeating-linear-gradient(#888 0 1px, transparent 1px 2px) 0 -7px / 1px 100% no-repeat; }
.kids li { height: 16px; display: flex; align-items: center; padding-left: 10px; background: repeating-linear-gradient(90deg, #888 0 1px, transparent 1px 2px) 0 8px / 10px 1px no-repeat; }
.leaf { display: flex; align-items: center; gap: 4px; height: 16px; padding: 0 1px; }
.leaf > span, .leaf > code { padding-top: 1px; }
.leaf.sel { background: #d9d9d9; }
.kids em { align-self: flex-start; margin-left: 1px; background: #ffe100; color: #000; font: italic 700 8px/9px "DejaVu Sans", sans-serif; }

.right { flex: 1; min-width: 0; display: flex; flex-direction: column; margin-right: 3px; }
.comp-tools { flex: none; height: 28px; gap: 7px; padding-left: 5px; }
.arr.near { margin: 0 0 0 -2px; }
.cols { flex: 1; min-height: 0; display: flex; gap: 5px; padding-bottom: 1px; }
.comps { flex: none; width: 184px; display: flex; flex-direction: column; border-right: 1px solid #8a8a8a; margin-top: 3px; }
.find { display: flex; align-items: center; gap: 4px; background: #fcfcfc; padding: 2px 4px 1px 2px; }
.find input { flex: none; width: 157px; height: 24px; border: 1px solid #777; background: #fff; padding: 0 2px 4px; }
input::placeholder { color: #777; opacity: 1; }
.find button { flex: 1; display: grid; place-items: center; }
.list { flex: 1; background: #fff; border: 1px solid #82878f; padding: 1px 0 0 4px; }
.list .leaf { gap: 7px; padding: 0 4px 0 3px; margin-left: -1px; }
.leaf.on { background: #316ac5; }
.props { flex: 1; min-width: 0; background: #fff; border-right: 1px solid #ccc; }
.ptab { height: 24px; padding: 2px 6px; }
.pbody { display: flex; justify-content: space-between; height: calc(100% - 24px); background: #fff; border: 1px solid #aaa; padding: 0 3px 0 0; margin-left: 2px; }
table { width: calc(100% - 60px); align-self: flex-start; border-collapse: collapse; table-layout: fixed; }
th { width: 22px; height: 19px; padding: 0; background: #f2f2f2; border: 1px solid #b5b5b5; font-weight: 400; line-height: 16px; }
th.name { width: auto; }
td { border-bottom: 1px solid #ccc; }
thead th { height: 24px; }
.first th { background: #ffd083; color: #600040; }
.first td { background: #0078d7; }
.scroll { width: 16px; display: flex; flex-direction: column; background: #f0f0f0; padding: 1px 0 4px; }
.thumb { height: 384px; margin-bottom: auto; background: #cdcdcd; }

.dialog { position: absolute; top: 6px; bottom: 0; left: 475px; right: 28px; display: flex; flex-direction: column; background: #b9d1ea; border: 1px solid #333; border-bottom: 0; box-shadow: inset 1px 1px #e9f1f9, inset -1px 0 #45d5f2; padding: 0 7px 4px; }
.dialog h2 { flex: none; height: 29px; margin: 1px -6px 0; padding-left: 6px; line-height: 35px; background: linear-gradient(#99b4d1, #b9d1ea); }
.tabs { flex: none; height: 21px; display: flex; align-items: flex-end; background: #f0f0f0; padding-left: 2px; }
.tabs button { height: 18px; width: 41px; padding-right: 5px; border: 1px solid #d9d9d9; border-bottom: 0; }
.tabs .act { height: 21px; width: 45px; padding-right: 7px; background: #fff; }
.page { flex: 1; min-height: 0; display: flex; flex-direction: column; align-items: flex-start; background: #f0f0f0; border: 1px solid #d9d9d9; box-shadow: inset 0 0 0 2px #fff; margin-right: 3px; padding: 3px 1px 0 4px; }
.dtools { flex: none; height: 28px; gap: 5px; padding: 0 6px; }
.push { height: 23px; padding: 0 4px; border: 1px solid #0078d7; background: #dcebf7; }
.dtools .push + .arr { margin: 0 -3px; }
.spec { height: 22px; width: 78px; display: flex; align-items: center; background: #fff; padding-left: 4px; }
.spec select { flex: 1; }
.spec .arr { margin: 0 1px; }
.pick { padding: 0 3px; gap: 3px; }
.ref { gap: 5px; }
.lvl { margin-left: 2px; }
.del { margin-left: 4px; }
.kind { margin-right: -4px; }
.gu { margin-right: 3px; }
.canvas { flex: 1; min-height: 0; align-self: stretch; border: 2px solid #f00; background: #14181f; }
.canvas svg { width: 100%; height: 100%; }
.ghost { fill: #39404a; font: 11px "Liberation Mono", monospace; text-anchor: middle; }
.num { fill: #fff; font: bold 7px "Liberation Mono", monospace; text-anchor: middle; }
.lab { fill: #c4c4c4; font: 13px "Noto Sans CJK SC", sans-serif; }
.grn { fill: #00f000; font: 11px "Liberation Mono", monospace; }
.grn.sm { font-size: 7px; }
.snaps { flex: none; height: 29px; display: flex; gap: 7px; padding: 1px 1px 2px; }
.snaps .strip { gap: 4px; padding-right: 5px; }
.snaps .tb { gap: 3px; }
.snaps .push { padding: 0 3px; }
.dstat { position: relative; flex: none; height: 26px; padding-top: 4px; display: flex; gap: 3px; background: #fbfbfb; }
.dstat span { border: 1px solid #ddd; background: linear-gradient(#fdfdfd, #f0f0f0); padding-left: 1px; line-height: 20px; }
.dstat span:first-child { width: 97px; padding-left: 4px; }
.dstat span:nth-child(2) { flex: 1; }
.grip { position: absolute; right: 1px; bottom: 1px; }

.status { flex: none; height: 22px; display: grid; grid-template-columns: 148px 78px 98px 48px 1fr 70px; gap: 2px; background: #fafafa; }
.status span { border: 1px solid #d8d8d8; padding-left: 1px; line-height: 20px; background: linear-gradient(#fdfdfd, #f2f2f2); }
.taskbar { flex: none; height: 40px; display: flex; background: #010b0f; color: #fff; }
.start { width: 48px; display: grid; place-items: center; }
.cortana { width: 344px; display: flex; align-items: center; background: #333; padding: 0 12px 0 8px; }
.ring { width: 22px; height: 22px; border: 3px solid #fff; border-radius: 50%; }
.cortana input { flex: 1; margin-left: 6px; background: none; font-size: 14px; }
.cortana input::placeholder { color: #a0a0a0; }
.apps { display: flex; gap: 1px; padding-left: 3px; }
.apps button { position: relative; width: 48px; display: grid; place-items: center; }
.apps button:nth-child(3) { margin-left: 4px; }
.apps .current { background: #343c40; }
.apps .run::after { content: ""; position: absolute; left: 4px; right: 4px; bottom: 0; height: 2px; background: #76b9ed; }
.apps .current::after { left: 0; right: 0; }
.tray { margin-left: auto; display: flex; align-items: center; gap: 8px; }
.tray span { font-size: 14px; }
.tray time { width: 76px; margin-right: 4px; text-align: center; line-height: 19px; }
.msg { position: relative; width: 34px; }
.msg b { position: absolute; left: 8px; top: 4px; width: 16px; height: 16px; border-radius: 50%; border: 1px solid #888; background: #222; font-size: 11px; line-height: 14px; text-align: center; font-weight: 400; }
.peek { width: 5px; height: 100%; border-left: 1px solid #777; margin-left: -6px; }
</style>
